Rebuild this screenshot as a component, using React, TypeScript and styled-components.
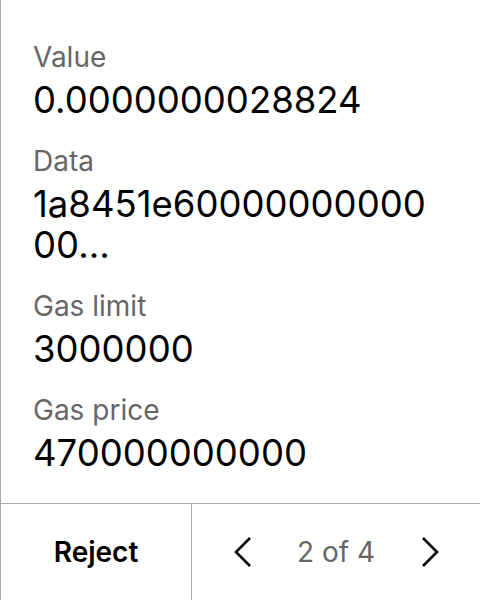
import React from "react"
import styled, { createGlobalStyle } from "styled-components"

const GlobalStyle = createGlobalStyle`
  html, body {
    margin: 0;
    padding: 0;
    background: #fff;
  }
  body {
    font-family: Inter, "Noto Sans", sans-serif;
  }
`

const Screen = styled.div`
  width: 480px;
  height: 600px;
  box-sizing: border-box;
  border-left: 1px solid #ababab;
  display: flex;
  flex-direction: column;
  background: #fff;
`

const Fields = styled.div`
  flex: 1;
  padding: 40px 32px 0 32px;
  display: flex;
  flex-direction: column;
  gap: 23px;
`

const Field = styled.div`
  display: flex;
  flex-direction: column;
  gap: 6px;
`

const Label = styled.div`
  font-size: 28px;
  line-height: 34px;
  color: #666;
`

const Value = styled.div`
  font-size: 36.5px;
  line-height: 41px;
  color: #000;
  word-break: break-all;
`

const Footer = styled.div`
  height: 96px;
  flex-shrink: 0;
  border-top: 1px solid #ababab;
  display: flex;
`

const RejectButton = styled.button`
  width: 191px;
  border: none;
  border-right: 1px solid #ababab;
  background: none;
  font-family: inherit;
  font-size: 28px;
  font-weight: 600;
  color: #000;
  padding: 0;
`

const Pager = styled.div`
  flex: 1;
  display: flex;
  align-items: center;
  justify-content: space-between;
  padding: 0 40px 0 40px;
`

const PageLabel = styled.span`
  font-size: 28px;
  color: #666;
`

const ArrowButton = styled.button`
  border: none;
  background: none;
  padding: 0;
  display: flex;
  align-items: center;
`

const Chevron = ({ dir }: { dir: "left" | "right" }) => (
  <svg width="20" height="32" viewBox="0 0 20 32" fill="none">
    <path
      d={dir === "left" ? "M18 2 L4 16 L18 30" : "M3 2 L17 16 L3 30"}
      stroke="#000"
      strokeWidth="2.6"
      strokeLinecap="butt"
      strokeLinejoin="miter"
    />
  </svg>
)

const fields: { label: string; value: React.ReactNode }[] = [
  { label: "Value", value: "0.0000000028824" },
  {
    label: "Data",
    value: (
      <>
        1a8451e60000000000
        <br />
        00...
      </>
    ),
  },
  { label: "Gas limit", value: "3000000" },
  { label: "Gas price", value: "470000000000" },
]

export default function App() {
  return (
    <>
      <GlobalStyle />
      <Screen>
        <Fields>
          {fields.map((f) => (
            <Field key={f.label}>
              <Label>{f.label}</Label>
              <Value>{f.value}</Value>
            </Field>
          ))}
        </Fields>
        <Footer>
          <RejectButton>Reject</RejectButton>
          <Pager>
            <ArrowButton>
              <Chevron dir="left" />
            </ArrowButton>
            <PageLabel>2 of 4</PageLabel>
            <ArrowButton>
              <Chevron dir="right" />
            </ArrowButton>
          </Pager>
        </Footer>
      </Screen>
    </>
  )
}
